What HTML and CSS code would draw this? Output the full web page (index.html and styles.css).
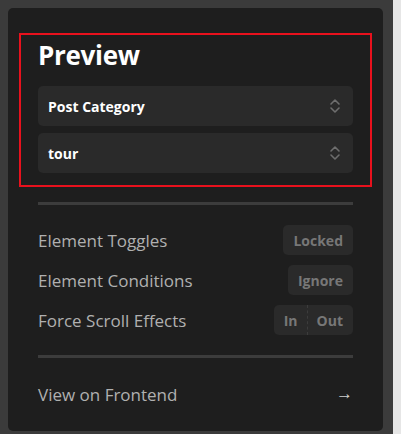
FILE: index.html
```html
<!DOCTYPE html>
<html lang="en">
<head>
<meta charset="utf-8">
<title>Preview</title>
<link rel="stylesheet" href="styles.css">
</head>
<body>
<div class="stage">
  <aside class="panel">
    <section class="preview">
      <h1 class="preview-title">Preview</h1>
      <div class="select">
        <span class="select-value">Post Category</span>
        <svg class="select-icon" width="12" height="16" viewBox="0 0 12 16" aria-hidden="true">
          <path d="M2 6 L6 2 L10 6 M2 10 L6 14 L10 10" fill="none" stroke="#6e6e6e" stroke-width="1.6" stroke-linecap="round" stroke-linejoin="round"/>
        </svg>
      </div>
      <div class="select">
        <span class="select-value">tour</span>
        <svg class="select-icon" width="12" height="16" viewBox="0 0 12 16" aria-hidden="true">
          <path d="M2 6 L6 2 L10 6 M2 10 L6 14 L10 10" fill="none" stroke="#6e6e6e" stroke-width="1.6" stroke-linecap="round" stroke-linejoin="round"/>
        </svg>
      </div>
    </section>

    <div class="panel-body">
      <hr class="rule">
      <div class="options">
        <div class="option">
          <span class="option-label">Element Toggles</span>
          <span class="chip">Locked</span>
        </div>
        <div class="option">
          <span class="option-label">Element Conditions</span>
          <span class="chip">Ignore</span>
        </div>
        <div class="option">
          <span class="option-label">Force Scroll Effects</span>
          <span class="chip chip-split">
            <span class="chip-part">In</span>
            <span class="chip-part chip-part-last">Out</span>
          </span>
        </div>
      </div>
      <hr class="rule">
      <a class="frontend-link" href="#">
        <span>View on Frontend</span>
        <span class="frontend-arrow">→</span>
      </a>
    </div>
  </aside>
  <div class="edge"></div>
</div>
</body>
</html>
```

FILE: styles.css
```css
* { box-sizing: border-box; }

html, body {
  margin: 0;
  height: 100%;
}

body {
  background: #3b3b3b;
  font-family: "Open Sans", "Segoe UI", sans-serif;
  overflow: hidden;
}

.stage {
  display: flex;
  height: 434px;
}

.panel {
  width: 375px;
  height: 423px;
  margin: 8px 10px 0 8px;
  background: #1e1e1e;
  border-radius: 5px;
  padding: 25px 11px 0 11px;
  display: flex;
  flex-direction: column;
}

.edge {
  flex: 1;
  background: #e6e6e6;
}

.preview {
  border: 2px solid #e8111d;
  padding: 0 17px 12px 17px;
  display: flex;
  flex-direction: column;
  gap: 7px;
}

.preview-title {
  margin: 0 0 4px 0;
  color: #ffffff;
  font-size: 26px;
  font-weight: 700;
  line-height: 40px;
  letter-spacing: -0.3px;
}

.select {
  height: 40px;
  background: #2a2a2a;
  border-radius: 5px;
  padding: 0 12px 0 10px;
  display: flex;
  align-items: center;
  justify-content: space-between;
}

.select-value {
  color: #ffffff;
  font-size: 14px;
  font-weight: 700;
}

.select-icon { display: block; }

.panel-body {
  padding: 0 19px;
  display: flex;
  flex-direction: column;
}

.rule {
  margin: 0;
  border: 0;
  height: 3px;
  background: #3c3c3c;
}

.panel-body > .rule:first-child { margin-top: 15px; }

.options {
  display: flex;
  flex-direction: column;
  gap: 10px;
  padding: 20px 0;
}

.option {
  height: 30px;
  display: flex;
  align-items: center;
  justify-content: space-between;
}

.option-label {
  color: #b0b0b0;
  font-size: 17px;
}

.chip {
  height: 30px;
  display: flex;
  align-items: center;
  padding: 0 10px;
  background: #2a2a2a;
  border-radius: 5px;
  color: #777777;
  font-size: 14px;
  font-weight: 700;
}

.chip-split { padding: 0; }

.chip-part {
  padding: 0 10px;
  height: 100%;
  display: flex;
  align-items: center;
}

.chip-part:first-child { padding-right: 9px; }

.chip-part-last {
  border-left: 1px dashed #3c3c3c;
  padding-left: 9px;
}

.frontend-link {
  height: 72px;
  display: flex;
  align-items: center;
  justify-content: space-between;
  color: #b0b0b0;
  font-size: 17px;
  text-decoration: none;
}

.frontend-arrow {
  color: #d0d0d0;
  font-size: 17px;
  font-family: "Liberation Sans", sans-serif;
}
```
